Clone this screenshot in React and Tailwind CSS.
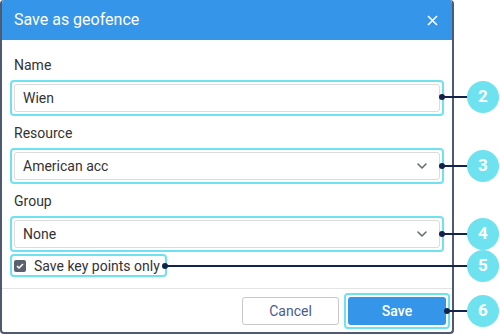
import React from "react";

const Frame = ({ className = "" }) => (
  <div
    className={`pointer-events-none absolute rounded-[4px] border-2 border-[#6fe2f0] ${className}`}
  />
);

const Callout = ({ n, top, from }) => (
  <div className="absolute left-0 right-0" style={{ top }}>
    <div
      className="absolute h-[2px] bg-[#13244a]"
      style={{ left: from, right: 30, top: -1 }}
    />
    <div
      className="absolute h-[6px] w-[6px] rounded-full bg-[#13244a]"
      style={{ left: from - 3, top: -3 }}
    />
    <div className="absolute right-[1px] top-[-16px] flex h-[32px] w-[32px] items-center justify-center rounded-full bg-[#6fe2f0] text-[17px] font-bold text-white">
      {n}
    </div>
  </div>
);

const Chevron = () => (
  <svg width="10" height="6" viewBox="0 0 10 6" fill="none">
    <path d="M1 1l4 4 4-4" stroke="#666b75" strokeWidth="1.6" strokeLinecap="round" strokeLinejoin="round" />
  </svg>
);

const Field = ({ value, select }) => (
  <div className="relative">
    <Frame className="-inset-[4px]" />
    <div className="flex h-[28px] items-center justify-between rounded-[3px] border border-[#dcdcdc] bg-white pl-[8px] pr-[12px] text-[14px] text-[#333]">
      <span>{value}</span>
      {select && <Chevron />}
    </div>
  </div>
);

export default function App() {
  return (
    <div className="relative h-[335px] w-[500px] overflow-hidden bg-white font-['Roboto',sans-serif]">
      <div className="flex h-[334px] w-[454px] flex-col overflow-hidden rounded-[4px] border-x-2 border-b-2 border-[#4e5a70] bg-white">
        <div className="flex h-[40px] shrink-0 items-center justify-between bg-[#3595e8] pl-[12px] pr-[14px] text-white">
          <span className="text-[16px]">Save as geofence</span>
          <svg width="11" height="11" viewBox="0 0 11 11">
            <path d="M1 1l9 9M10 1l-9 9" stroke="white" strokeWidth="1.6" />
          </svg>
        </div>

        <div className="flex flex-col px-[12px] pt-[16px] pb-[16px]">
          <label className="h-[18px] text-[14px] leading-[18px] text-[#333]">Name</label>
          <div className="mt-[10px]">
            <Field value="Wien" />
          </div>

          <label className="mt-[12px] h-[18px] text-[14px] leading-[18px] text-[#333]">Resource</label>
          <div className="mt-[10px]">
            <Field value="American acc" select />
          </div>

          <label className="mt-[12px] h-[18px] text-[14px] leading-[18px] text-[#333]">Group</label>
          <div className="mt-[10px]">
            <Field value="None" select />
          </div>

          <div className="relative mt-[12px] flex h-[12px] w-[147px] items-center gap-[8px]">
            <Frame className="-left-[4px] -right-[6px] -top-[6px] -bottom-[5px]" />
            <div className="flex h-[12px] w-[12px] items-center justify-center rounded-[2px] bg-[#5b606e]">
              <svg width="8" height="6" viewBox="0 0 8 6" fill="none">
                <path d="M1 3l2 2 4-4" stroke="white" strokeWidth="1.5" />
              </svg>
            </div>
            <span className="text-[14px] leading-[16px] text-[#333]">Save key points only</span>
          </div>
        </div>

        <div className="flex justify-end gap-[9px] border-t border-[#e4e4e4] px-[6px] pt-[8px]">
          <button className="h-[28px] w-[97px] rounded-[3px] border border-[#c8c8c8] bg-white text-[14px] text-[#4b5b8e]">
            Cancel
          </button>
          <div className="relative">
            <Frame className="-inset-[4px]" />
            <button className="h-[28px] w-[98px] rounded-[3px] bg-[#3595e8] text-[14px] font-medium text-white">
              Save
            </button>
          </div>
        </div>
      </div>

      <Callout n="2" top={97} from={442} />
      <Callout n="3" top={166} from={442} />
      <Callout n="4" top={234} from={442} />
      <Callout n="5" top={266} from={165} />
      <Callout n="6" top={311} from={447} />
    </div>
  );
}
